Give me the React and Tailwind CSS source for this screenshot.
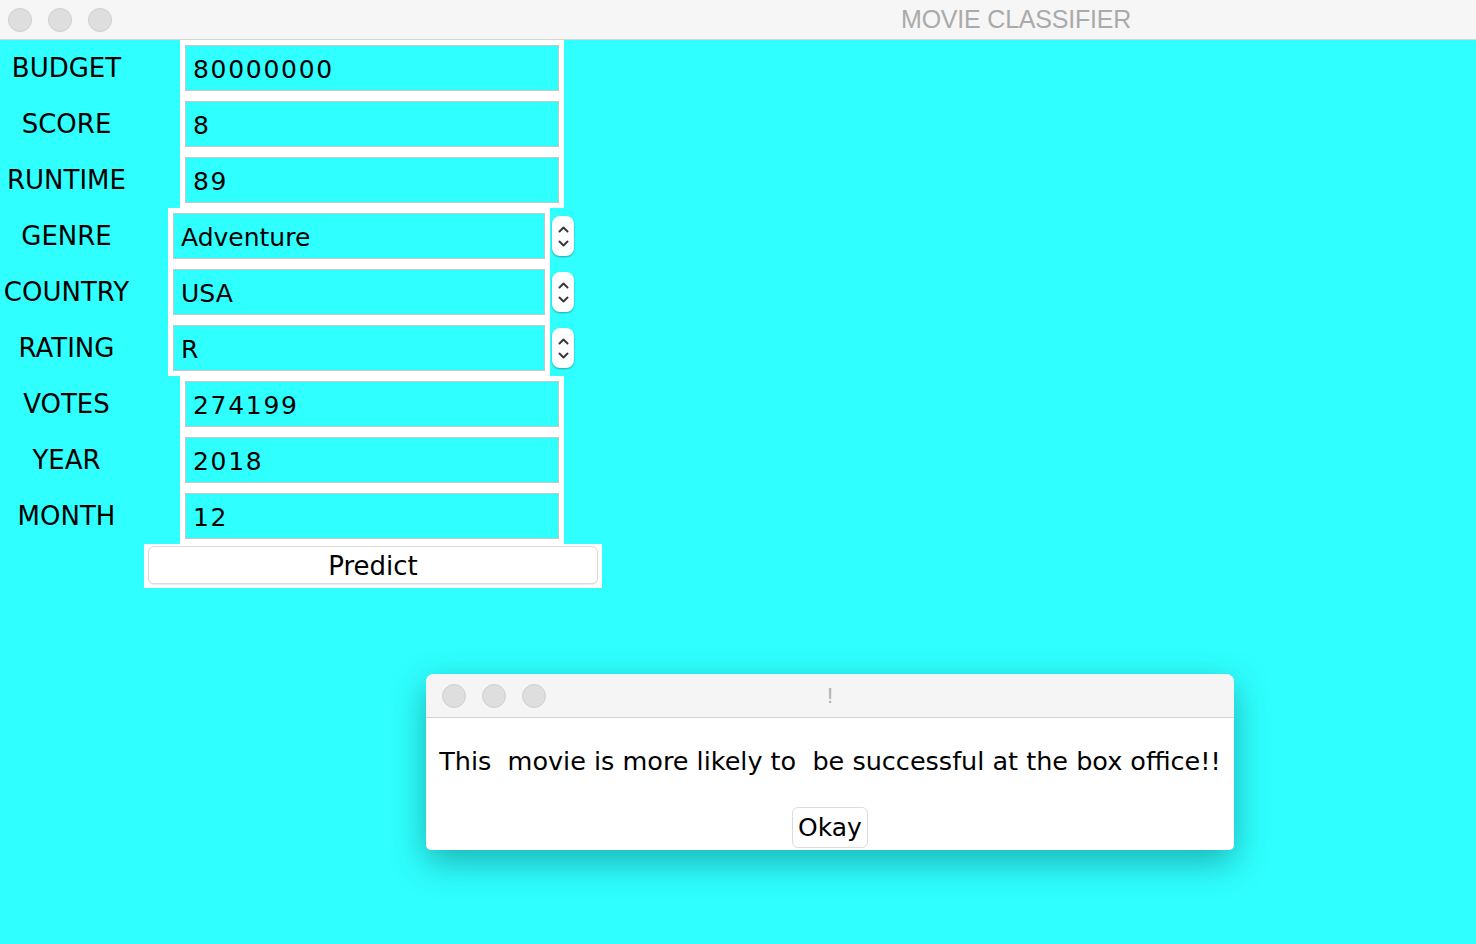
import React from "react";

const FONT = { fontFamily: '"DejaVu Sans", Verdana, sans-serif' };

function TrafficLights() {
  return (
    <div className="flex items-center gap-[16px]">
      {[0, 1, 2].map((i) => (
        <div
          key={i}
          className="w-[24px] h-[24px] rounded-full bg-[#dedede] border border-[#cfcfcf]"
        />
      ))}
    </div>
  );
}

function Spinner() {
  return (
    <div className="w-[22px] h-[40px] rounded-[8px] bg-white shadow-[0_1px_2px_rgba(0,0,0,0.35)] flex flex-col items-center justify-center gap-[7px]">
      <svg width="11" height="7" viewBox="0 0 11 7">
        <path d="M1.5 5.5 L5.5 1.5 L9.5 5.5" fill="none" stroke="#3a3a3a" strokeWidth="2" strokeLinecap="round" strokeLinejoin="round" />
      </svg>
      <svg width="11" height="7" viewBox="0 0 11 7">
        <path d="M1.5 1.5 L5.5 5.5 L9.5 1.5" fill="none" stroke="#3a3a3a" strokeWidth="2" strokeLinecap="round" strokeLinejoin="round" />
      </svg>
    </div>
  );
}

function Field({ value, width, numeric }) {
  return (
    <div
      className="h-[46px] border border-[#c4c4c4] bg-[#2fffff] flex items-center pl-[7px] pt-[3px] text-[25px] text-black"
      style={{ width, letterSpacing: numeric ? "1.7px" : undefined }}
    >
      {value}
    </div>
  );
}

function Labels({ items }) {
  return (
    <div className="w-[133px] py-[5px] flex flex-col gap-[10px]">
      {items.map((t) => (
        <div key={t} className="h-[46px] flex items-center justify-center pt-[1px] text-[26px] text-black">
          {t}
        </div>
      ))}
    </div>
  );
}

export default function App() {
  return (
    <div className="relative w-full h-[944px] bg-[#2fffff] overflow-hidden" style={FONT}>
      {/* Title bar */}
      <div className="h-[40px] bg-[#f6f6f6] border-b border-[#d6d6d6] flex items-center pl-[8px]">
        <TrafficLights />
        <div
          className="ml-[789px] text-[25px] text-[#aaaaaa] tracking-[-0.2px]"
          style={{ fontFamily: '"Liberation Sans", Arial, sans-serif' }}
        >
          MOVIE CLASSIFIER
        </div>
      </div>

      {/* Form */}
      <div className="flex flex-col">
        <div className="flex">
          <Labels items={["BUDGET", "SCORE", "RUNTIME"]} />
          <div className="ml-[47px] bg-white p-[5px] flex flex-col gap-[10px]">
            <Field value="80000000" width={374} numeric />
            <Field value="8" width={374} numeric />
            <Field value="89" width={374} numeric />
          </div>
        </div>

        <div className="flex">
          <Labels items={["GENRE", "COUNTRY", "RATING"]} />
          <div className="ml-[35px] bg-white p-[5px] flex flex-col gap-[10px]">
            <Field value="Adventure" width={372} />
            <Field value="USA" width={372} />
            <Field value="R" width={372} />
          </div>
          <div className="ml-[2px] py-[5px] flex flex-col gap-[10px]">
            {[0, 1, 2].map((i) => (
              <div key={i} className="h-[46px] flex items-center">
                <Spinner />
              </div>
            ))}
          </div>
        </div>

        <div className="flex">
          <Labels items={["VOTES", "YEAR", "MONTH"]} />
          <div className="ml-[47px] bg-white p-[5px] flex flex-col gap-[10px]">
            <Field value="274199" width={374} numeric />
            <Field value="2018" width={374} numeric />
            <Field value="12" width={374} numeric />
          </div>
        </div>

        <div className="ml-[144px] w-[458px] bg-white pt-[2px] px-[4px] pb-[4px]">
          <button className="w-full h-[38px] bg-white border border-[#dadada] rounded-[6px] shadow-[0_1px_1px_rgba(0,0,0,0.08)] text-[26px] text-black flex items-center justify-center pt-[2px]">
            Predict
          </button>
        </div>
      </div>

      {/* Dialog window overlay */}
      <div className="absolute left-[426px] top-[674px] w-[808px] h-[176px] rounded-t-[8px] rounded-b-[5px] bg-white overflow-hidden shadow-[0_12px_35px_rgba(0,60,60,0.4)] flex flex-col">
        <div className="relative h-[44px] bg-[#f5f5f5] border-b border-[#d3d3d3] flex items-center pl-[16px]">
          <TrafficLights />
          <div className="absolute left-0 right-0 top-0 h-full flex items-center justify-center text-[22px] text-[#b0b0b0]" style={{ fontFamily: '"Liberation Sans", Arial, sans-serif' }}>
            !
          </div>
        </div>
        <div className="flex-1 flex flex-col items-center">
          <div className="mt-[28px] h-[30px] flex items-center text-[25.5px] text-black whitespace-pre">
            {"This  movie is more likely to  be successful at the box office!!"}
          </div>
          <button className="mt-[31px] w-[76px] h-[41px] bg-white border border-[#dcdcdc] rounded-[6px] text-[25px] text-black flex items-center justify-center pt-[1px]">
            Okay
          </button>
        </div>
      </div>
    </div>
  );
}
